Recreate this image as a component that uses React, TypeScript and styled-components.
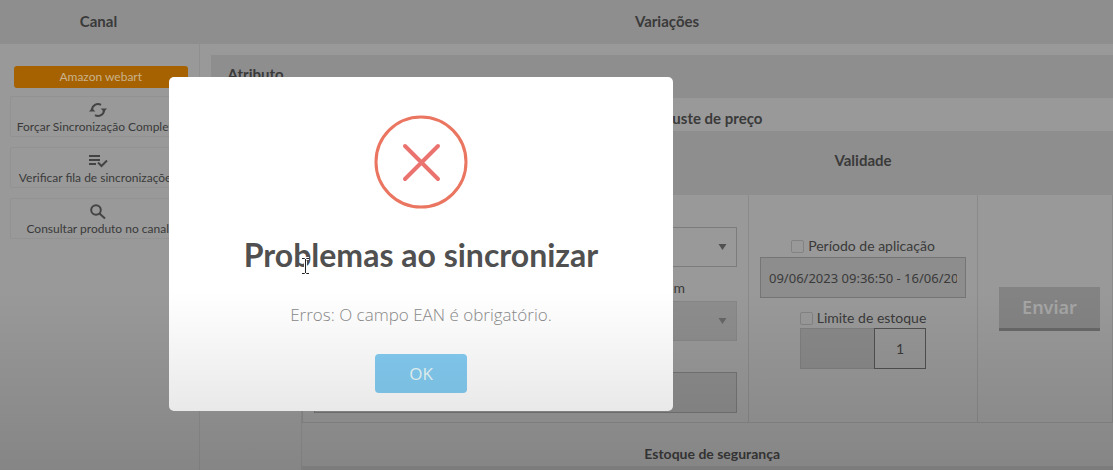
import React from "react";
import styled, { createGlobalStyle } from "styled-components";

const GlobalStyle = createGlobalStyle`
  * { box-sizing: border-box; }
  body {
    margin: 0;
    background: #999;
    color: #3a3a3a;
    font-family: Lato, "Noto Sans", sans-serif;
    font-size: 14px;
    line-height: 20px;
    overflow: hidden;
  }
  button, input, select { font: inherit; color: inherit; margin: 0; }
`;

const Page = styled.div`
  position: relative;
  min-height: 100vh;
  overflow: hidden;
`;

const OuterTable = styled.table`
  width: 100%;
  border-collapse: collapse;
  table-layout: fixed;
`;

const HeadCell = styled.th<{ $width?: number }>`
  width: ${(p) => (p.$width ? `${p.$width}px` : "auto")};
  height: 44px;
  padding: ${(p) => (p.$width ? "0 2px 3px 0" : "0 0 3px 22px")};
  background: #8e8e8e;
  font-size: 15px;
  font-weight: 700;
`;

const ChannelCell = styled.td`
  vertical-align: top;
  padding: 22px 11px 0 10px;
  border-right: 1px solid #8f8f8f;
`;

const VariationCell = styled.td`
  vertical-align: top;
  padding: 11px 0 0 11px;
`;

const ChannelTag = styled.div`
  height: 22px;
  margin-left: 4px;
  border-radius: 3px;
  background: #a66200;
  color: #c9b28c;
  font-size: 12px;
  line-height: 22px;
  text-align: center;
`;

const ActionList = styled.div`
  display: flex;
  flex-direction: column;
  gap: 10px;
  margin: 8px 2px 0 0;
`;

const Action = styled.button`
  display: flex;
  flex-direction: column;
  align-items: center;
  height: 41px;
  padding: 5px 0 0;
  border: 1px solid #929292;
  border-radius: 2px;
  background: transparent;
  font-size: 12px;
  line-height: 17px;
  white-space: nowrap;
  svg { display: block; flex: none; }
`;

const AttributeBar = styled.div`
  height: 43px;
  padding: 9px 17px;
  background: #8e8e8e;
  font-size: 15px;
  font-weight: 700;
`;

const Details = styled.div`
  margin-left: 90px;
  border-left: 1px solid #8f8f8f;
`;

const SectionTitle = styled.h3<{ $last?: boolean }>`
  margin: 0;
  padding: ${(p) => (p.$last ? "21px 0 2px 10px" : "10px 0 3px 6px")};
  font-size: ${(p) => (p.$last ? "14px" : "15px")};
  line-height: 20px;
  text-align: center;
`;

const PriceTable = styled.table`
  width: 100%;
  border-collapse: collapse;
  table-layout: fixed;
`;

const PriceHead = styled.th<{ $width?: number }>`
  width: ${(p) => (p.$width ? `${p.$width}px` : "auto")};
  height: 64px;
  padding: 0 0 6px;
  background: #8e8e8e;
  font-size: 15px;
  font-weight: 700;
`;

const PriceCell = styled.td`
  height: 227px;
  padding: 32px 11px 0;
  vertical-align: top;
  border: 1px solid #8a8a8a;
  border-top: 0;
`;

const Stack = styled.div`
  display: flex;
  flex-direction: column;
  align-items: stretch;
`;

const SelectBox = styled.div<{ $disabled?: boolean }>`
  position: relative;
  height: 40px;
  border: 1px solid ${(p) => (p.$disabled ? "#868686" : "#7c7c7c")};
  background: ${(p) => (p.$disabled ? "#8d8d8d" : "#999")};
  color: ${(p) => (p.$disabled ? "#666" : "#505050")};
  select {
    width: 100%;
    height: 100%;
    border: 0;
    background: transparent;
    appearance: none;
    opacity: 1;
  }
  svg { position: absolute; right: 9px; top: 16px; }
`;

const RightLabel = styled.label`
  padding: 11px 52px 3px 0;
  text-align: right;
`;

const TextField = styled.input<{ $gap?: boolean }>`
  width: 100%;
  height: 41px;
  margin-top: ${(p) => (p.$gap ? "31px" : "0")};
  padding: 0 8px;
  border: 1px solid #757575;
  border-radius: 0;
  background: #8d8d8d;
  font-family: "Noto Sans", sans-serif;
  font-size: 13px;
`;

const Check = styled.label<{ $spaced?: boolean }>`
  display: flex;
  justify-content: center;
  align-items: center;
  gap: 4px;
  padding: ${(p) => (p.$spaced ? "10px 0 0" : "9px 0 1px")};
  input {
    appearance: none;
    width: 13px;
    height: 13px;
    border: 1px solid #838383;
    border-radius: 2px;
  }
`;

const StockRow = styled.div`
  display: flex;
  align-self: center;
  height: 41px;
`;

const StockAmount = styled.input`
  width: 74px;
  border: 1px solid #7f7f7f;
  border-right: 0;
  background: #898989;
`;

const StockLimit = styled.input`
  width: 52px;
  border: 1px solid #505050;
  border-radius: 0;
  background: #969696;
  text-align: center;
`;

const SendCell = styled(PriceCell)`
  padding: 92px 12px 0 21px;
`;

const SendButton = styled.button`
  width: 100%;
  height: 44px;
  padding: 0 0 2px;
  border: 0;
  border-bottom: 3px solid #686868;
  background: #838383;
  color: #a5a5a5;
  font-family: "Noto Sans", sans-serif;
  font-size: 18px;
  font-weight: 600;
`;

const NextBar = styled.div`
  height: 4px;
  background: #8e8e8e;
`;

const Overlay = styled.div`
  position: absolute;
  inset: 0;
  padding: 77px 0 0 169px;
`;

const Modal = styled.div`
  position: relative;
  width: 504px;
  max-width: 100%;
  padding: 38px 20px 18px;
  border-radius: 5px;
  background: #fff;
  display: flex;
  flex-direction: column;
  align-items: center;
`;

const ModalTitle = styled.h2`
  margin: 24px 0 0;
  color: #505050;
  font-size: 32px;
  line-height: 44px;
  font-weight: 700;
  white-space: nowrap;
`;

const ModalText = styled.p`
  margin: 26px 0 0;
  color: #8a8a8a;
  font-family: "Open Sans", sans-serif;
  font-size: 17px;
  font-weight: 300;
  line-height: 24px;
`;

const OkButton = styled.button`
  width: 92px;
  height: 39px;
  margin-top: 27px;
  border: 0;
  border-radius: 4px;
  background: #84cdf3;
  color: #e9fafa;
  font-family: "Open Sans", sans-serif;
  font-size: 17px;
`;

const Pointer = styled.svg`
  position: absolute;
  left: 131px;
  top: 180px;
`;

const Shade = styled.div`
  position: absolute;
  inset: 0;
  pointer-events: none;
  background: linear-gradient(rgba(0, 0, 0, 0) 62%, rgba(0, 0, 0, 0.08) 85%, rgba(0, 0, 0, 0.13));
`;

const SyncIcon = () => (
  <svg width="18" height="16" viewBox="0 0 18 16" fill="none" stroke="#444" strokeWidth="2">
    <path d="M3 9V8a6 6 0 0 1 9-5.200M15 7v1a6 6 0 0 1-9 5.200" />
    <path d="M0 9.500 3 6l3.300 3.500zM18 6.500 15 10l-3.300-3.500z" fill="#444" stroke="none" />
  </svg>
);

const QueueIcon = () => (
  <svg width="20" height="16" viewBox="0 0 20 16" fill="none" stroke="#444" strokeWidth="2">
    <path d="M1 3h11M1 7h11M1 11h7M10 9.500l3.500 3.500 5.500-5.500" />
  </svg>
);

const SearchIcon = () => (
  <svg width="16" height="16" viewBox="0 0 16 16" fill="none" stroke="#444" strokeWidth="2">
    <circle cx="6" cy="6" r="4.800" />
    <path d="m9.500 9.500 5.500 5" />
  </svg>
);

const Arrow = () => (
  <svg width="9" height="6" viewBox="0 0 9 6" fill="currentColor" aria-hidden="true">
    <path d="M.5 0h8l-4 6z" />
  </svg>
);

const ErrorIcon = () => (
  <svg width="94" height="94" viewBox="0 0 94 94" fill="none" aria-hidden="true">
    <circle cx="47" cy="47" r="45" stroke="#ea7560" strokeWidth="3" />
    <path d="m31 31 33 33M64 31 31 64" stroke="#ea7370" strokeWidth="4" strokeLinecap="round" />
  </svg>
);

export default function App() {
  return (
    <>
      <GlobalStyle />
      <Page>
        <OuterTable>
          <thead>
            <tr>
              <HeadCell $width={199}>Canal</HeadCell>
              <HeadCell>Variações</HeadCell>
            </tr>
          </thead>
          <tbody>
            <tr>
              <ChannelCell>
                <ChannelTag>Amazon webart</ChannelTag>
                <ActionList>
                  <Action type="button"><SyncIcon />Forçar Sincronização Completa</Action>
                  <Action type="button"><QueueIcon />Verificar fila de sincronizações</Action>
                  <Action type="button"><SearchIcon />Consultar produto no canal</Action>
                </ActionList>
              </ChannelCell>
              <VariationCell>
                <AttributeBar>Atributo</AttributeBar>
                <Details>
                  <SectionTitle>Ajuste de preço</SectionTitle>
                  <PriceTable>
                    <thead>
                      <tr>
                        <PriceHead />
                        <PriceHead $width={229}>Validade</PriceHead>
                        <PriceHead $width={135} />
                      </tr>
                    </thead>
                    <tbody>
                      <tr>
                        <PriceCell>
                          <Stack>
                            <SelectBox><select aria-label="Ajuste" /><Arrow /></SelectBox>
                            <RightLabel htmlFor="target">em</RightLabel>
                            <SelectBox $disabled><select id="target" disabled /><Arrow /></SelectBox>
                            <TextField $gap aria-label="Valor" disabled />
                          </Stack>
                        </PriceCell>
                        <PriceCell>
                          <Stack>
                            <Check><input type="checkbox" />Período de aplicação</Check>
                            <TextField aria-label="Período" defaultValue="09/06/2023 09:36:50 - 16/06/20" />
                            <Check $spaced><input type="checkbox" />Limite de estoque</Check>
                            <StockRow>
                              <StockAmount aria-label="Estoque" disabled />
                              <StockLimit aria-label="Limite" defaultValue="1" />
                            </StockRow>
                          </Stack>
                        </PriceCell>
                        <SendCell><SendButton type="button">Enviar</SendButton></SendCell>
                      </tr>
                    </tbody>
                  </PriceTable>
                  <SectionTitle $last>Estoque de segurança</SectionTitle>
                  <NextBar />
                </Details>
              </VariationCell>
            </tr>
          </tbody>
        </OuterTable>
        <Overlay>
          <Modal role="dialog" aria-labelledby="modal-title">
            <ErrorIcon />
            <ModalTitle id="modal-title">Problemas ao sincronizar</ModalTitle>
            <ModalText>Erros: O campo EAN é obrigatório.</ModalText>
            <OkButton type="button">OK</OkButton>
            <Pointer width="11" height="18" viewBox="0 0 11 18" fill="none" aria-hidden="true">
              <path d="M2 1.500h2.500l1 1 1-1H9M5.500 2v14M2 16.500h2.500l1-1 1 1H9" stroke="#fff" strokeWidth="3" />
              <path d="M2 1.500h2.500l1 1 1-1H9M5.500 2v14M2 16.500h2.500l1-1 1 1H9" stroke="#222" />
            </Pointer>
          </Modal>
        </Overlay>
        <Shade />
      </Page>
    </>
  );
}
